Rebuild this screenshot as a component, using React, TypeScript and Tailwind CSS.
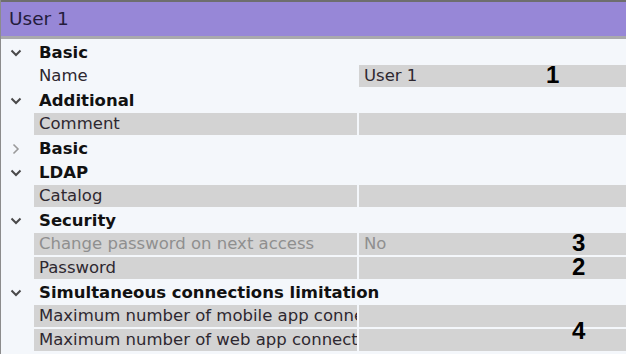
import React from 'react';

type Row =
  | { kind: 'group'; label: string; open: boolean }
  | { kind: 'prop'; label: string; value?: string; muted?: boolean; plainLabel?: boolean };

const rows: Row[] = [
  { kind: 'group', label: 'Basic', open: true },
  { kind: 'prop', label: 'Name', value: 'User 1', plainLabel: true },
  { kind: 'group', label: 'Additional', open: true },
  { kind: 'prop', label: 'Comment' },
  { kind: 'group', label: 'Basic', open: false },
  { kind: 'group', label: 'LDAP', open: true },
  { kind: 'prop', label: 'Catalog' },
  { kind: 'group', label: 'Security', open: true },
  { kind: 'prop', label: 'Change password on next access', value: 'No', muted: true },
  { kind: 'prop', label: 'Password' },
  { kind: 'group', label: 'Simultaneous connections limitation', open: true },
  { kind: 'prop', label: 'Maximum number of mobile app connections' },
  { kind: 'prop', label: 'Maximum number of web app connections' },
];

function Chevron({ open }: { open: boolean }) {
  return open ? (
    <svg width="12" height="8" viewBox="0 0 12 8" className="text-[#4a4a4a]">
      <path d="M1.5 1.5 L6 6 L10.5 1.5" fill="none" stroke="currentColor" strokeWidth="2" />
    </svg>
  ) : (
    <svg width="8" height="12" viewBox="0 0 8 12" className="text-[#9a9a9a]">
      <path d="M1.5 1.5 L6 6 L1.5 10.5" fill="none" stroke="currentColor" strokeWidth="1.6" />
    </svg>
  );
}

const mark = 'absolute text-[24px] leading-none font-bold text-black';
const markFont = { fontFamily: '"Liberation Sans", Arial, sans-serif' };

export default function App() {
  return (
    <div
      className="relative w-[626px] h-[354px] overflow-hidden bg-[#f4f7fb] border-l border-[#8c8c8c]"
      style={{ fontFamily: '"DejaVu Sans", Verdana, sans-serif' }}
    >
      <div className="h-[39px] border-t-2 border-b-[3px] border-t-[#6e6e6e] border-b-[#a9a9ad] bg-[#9787d7] flex items-center pl-[8px]">
        <span className="text-[18.5px] text-[#241c3c]">User 1</span>
      </div>
      <div className="flex flex-col pt-[2px]">
        {rows.map((r, i) =>
          r.kind === 'group' ? (
            <div key={i} className="h-[24px] flex items-center">
              <div className="w-[33px] flex justify-center pr-[4px]">
                <Chevron open={r.open} />
              </div>
              <span className="pl-[5px] text-[16.5px] font-bold text-[#111111] whitespace-nowrap">{r.label}</span>
            </div>
          ) : (
            <div key={i} className="h-[24px] flex pl-[33px] pb-[2px]">
              <div
                className={`w-[323px] flex items-center pl-[5px] overflow-hidden whitespace-nowrap text-[16.5px] ${
                  r.plainLabel ? '' : 'bg-[#d3d3d3]'
                } ${r.muted ? 'text-[#8f8f8f]' : 'text-[#2e2830]'}`}
              >
                {r.label}
              </div>
              <div className="ml-[2px] flex-1 flex items-center pl-[5px] bg-[#d3d3d3] text-[16.5px] whitespace-nowrap">
                <span className={r.muted ? 'text-[#8f8f8f]' : 'text-[#2e2830]'}>{r.value ?? ''}</span>
              </div>
            </div>
          )
        )}
      </div>
      <span className={`${mark} left-[545px] top-[63px]`} style={markFont}>1</span>
      <span className={`${mark} left-[571px] top-[231px]`} style={markFont}>3</span>
      <span className={`${mark} left-[571px] top-[255px]`} style={markFont}>2</span>
      <span className={`${mark} left-[571px] top-[319px]`} style={markFont}>4</span>
    </div>
  );
}
